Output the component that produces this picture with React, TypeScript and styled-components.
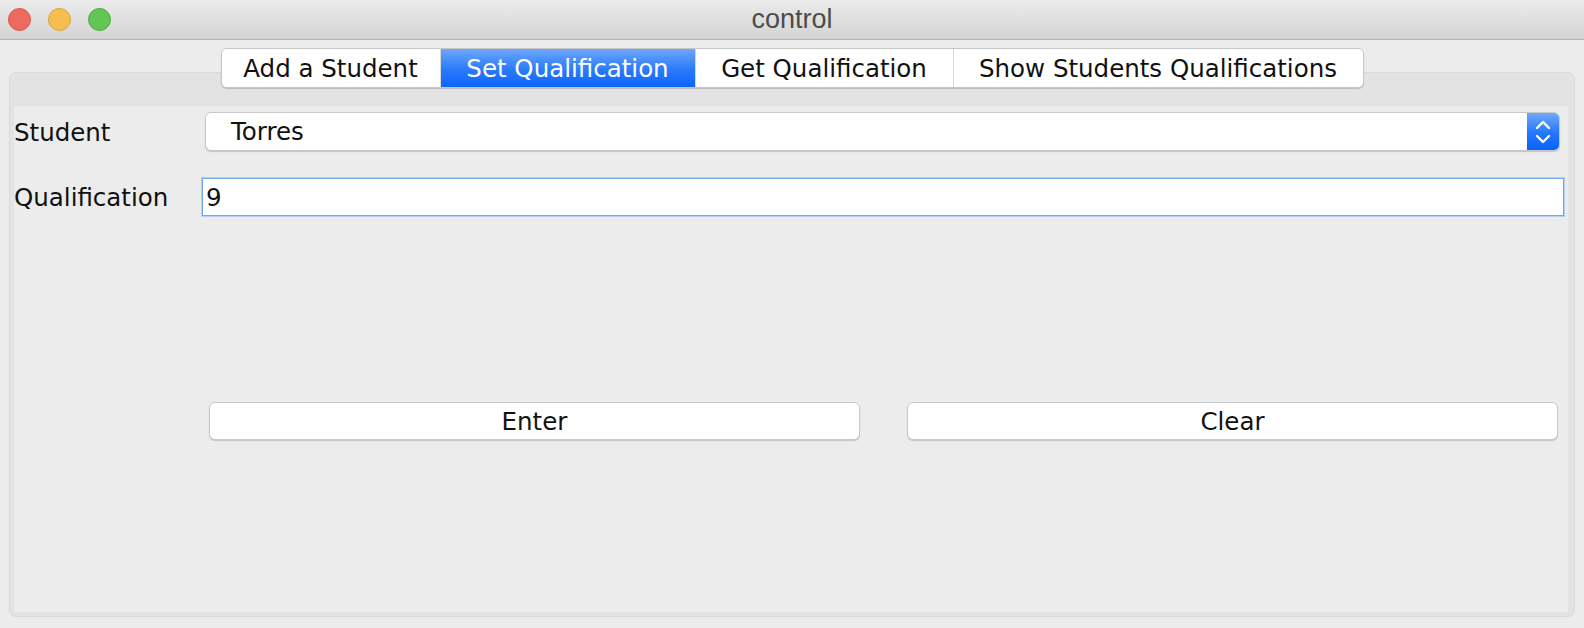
import React from 'react'
import styled, { createGlobalStyle } from 'styled-components'

const GlobalStyle = createGlobalStyle`
  html, body {
    margin: 0;
    padding: 0;
    background: #ececec;
  }
  body {
    font-family: "DejaVu Sans", "Liberation Sans", sans-serif;
    color: #111;
  }
`

const Window = styled.div`
  width: 1584px;
  height: 628px;
  display: flex;
  flex-direction: column;
  background: #ececec;
  overflow: hidden;
`

const TitleBar = styled.div`
  height: 39px;
  flex: 0 0 39px;
  display: grid;
  grid-template-columns: 1fr auto 1fr;
  align-items: center;
  background: linear-gradient(#ebebeb, #d4d4d4);
  border-bottom: 1px solid #b4b4b4;
`

const Lights = styled.div`
  display: flex;
  gap: 17px;
  padding-left: 8px;
`

const Light = styled.span<{ $fill: string; $edge: string }>`
  width: 23px;
  height: 23px;
  border-radius: 50%;
  box-sizing: border-box;
  background: ${p => p.$fill};
  border: 1px solid ${p => p.$edge};
`

const Title = styled.div`
  font-family: "Liberation Sans", Arial, sans-serif;
  font-size: 27px;
  color: #4c4c4c;
`

const Body = styled.div`
  flex: 1;
  display: flex;
  flex-direction: column;
  padding: 8px 9px 11px 9px;
`

const TabStrip = styled.div`
  position: relative;
  z-index: 1;
  align-self: center;
  display: flex;
  height: 40px;
  margin-bottom: -16px;
  background: #fff;
  border: 1px solid #c6c6c6;
  border-radius: 6px;
  box-shadow: 0 1px 1px rgba(0, 0, 0, 0.18);
  box-sizing: border-box;
  overflow: hidden;
`

const Tab = styled.div<{ $active?: boolean; $width: number }>`
  width: ${p => p.$width}px;
  display: flex;
  align-items: center;
  justify-content: center;
  font-size: 24.5px;
  white-space: nowrap;
  color: ${p => (p.$active ? '#fff' : '#111')};
  background: ${p => (p.$active ? 'linear-gradient(#6ca7fc, #2a7afb 55%, #0c64fb)' : '#fff')};
  & + & {
    border-left: 1px solid ${p => (p.$active ? 'transparent' : '#dadada')};
  }
`

const Pane = styled.div`
  flex: 1;
  display: flex;
  flex-direction: column;
  padding: 33px 6px 4px 4px;
  background: #e3e3e3;
  border: 1px solid #dadada;
  border-radius: 7px;
`

const Content = styled.div`
  flex: 1;
  background: #ececec;
  display: grid;
  grid-template-columns: 188px 1fr;
  grid-template-rows: 45px 65px 186px 38px;
  align-content: start;
`

const Label = styled.div<{ $top: number }>`
  font-size: 24.5px;
  align-self: start;
  padding-top: ${p => p.$top}px;
  white-space: nowrap;
`

const Combo = styled.div`
  align-self: end;
  height: 39px;
  margin: 0 8px 0 3px;
  display: flex;
  align-items: stretch;
  background: #fff;
  border: 1px solid #c8c8c8;
  border-radius: 6px;
  box-shadow: 0 1px 1px rgba(0, 0, 0, 0.18);
  box-sizing: border-box;
  overflow: hidden;
`

const ComboText = styled.div`
  flex: 1;
  display: flex;
  align-items: center;
  padding-left: 25px;
  font-size: 24.5px;
`

const Stepper = styled.div`
  width: 32px;
  display: flex;
  align-items: center;
  justify-content: center;
  background: linear-gradient(#6ea8fd, #2476fb 55%, #0a62fb);
`

const Field = styled.div`
  align-self: end;
  height: 38px;
  margin: 0 4px 0 0;
  display: flex;
  align-items: center;
  padding-left: 3px;
  font-size: 24.5px;
  background: #fff;
  border: 1px solid #6fa7ee;
  box-shadow: 0 0 0 1px #b3d0f4;
  box-sizing: border-box;
`

const Spacer = styled.div`
  grid-column: 1 / span 2;
`

const ButtonRow = styled.div`
  grid-column: 2;
  display: grid;
  grid-template-columns: 1fr 1fr;
  gap: 47px;
  padding: 0 10px 0 7px;
`

const Button = styled.button`
  height: 38px;
  font-family: inherit;
  font-size: 24.5px;
  color: #111;
  background: #fff;
  border: 1px solid #c8c8c8;
  border-radius: 6px;
  box-shadow: 0 1px 1px rgba(0, 0, 0, 0.18);
  padding: 0;
`

const StepperIcon = () => (
  <svg width="18" height="28" viewBox="0 0 18 28" fill="none" stroke="#fff" strokeWidth="2.4" strokeLinecap="round" strokeLinejoin="round">
    <path d="M3 10 L9 4 L15 10" />
    <path d="M3 18 L9 24 L15 18" />
  </svg>
)

const tabs = [
  { label: 'Add a Student', width: 218 },
  { label: 'Set Qualification', width: 254 },
  { label: 'Get Qualification', width: 257 },
  { label: 'Show Students Qualifications', width: 409 },
]

export default function App() {
  return (
    <>
      <GlobalStyle />
      <Window>
        <TitleBar>
          <Lights>
            <Light $fill="#ee6a5f" $edge="#d5574b" />
            <Light $fill="#f5be4f" $edge="#d9a23c" />
            <Light $fill="#62c655" $edge="#4fa83f" />
          </Lights>
          <Title>control</Title>
          <div />
        </TitleBar>
        <Body>
          <TabStrip>
            {tabs.map(t => (
              <Tab key={t.label} $width={t.width} $active={t.label === 'Set Qualification'}>{t.label}</Tab>
            ))}
          </TabStrip>
          <Pane>
            <Content>
              <Label $top={12}>Student</Label>
              <Combo>
                <ComboText>Torres</ComboText>
                <Stepper>
                  <StepperIcon />
                </Stepper>
              </Combo>
              <Label $top={32}>Qualification</Label>
              <Field>9</Field>
              <Spacer />
              <ButtonRow>
                <Button>Enter</Button>
                <Button>Clear</Button>
              </ButtonRow>
            </Content>
          </Pane>
        </Body>
      </Window>
    </>
  )
}
